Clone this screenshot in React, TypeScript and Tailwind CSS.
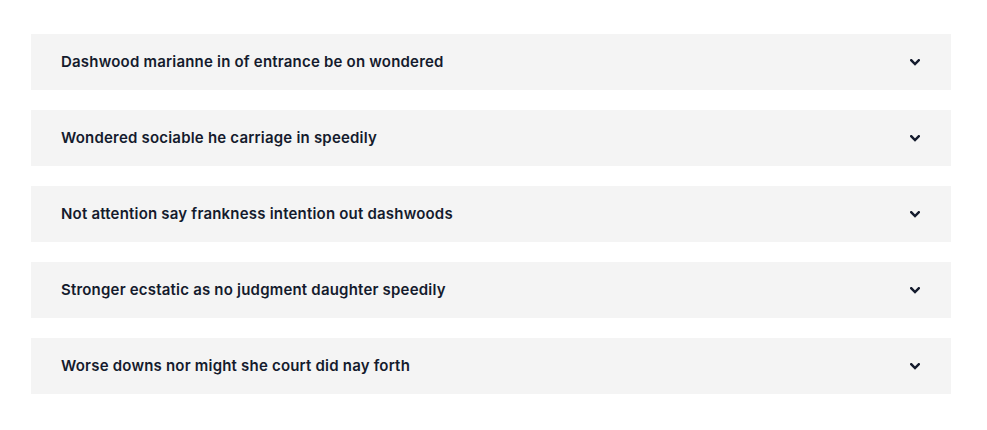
import React from "react"

const faqs = [
    "Dashwood marianne in of entrance be on wondered",
    "Wondered sociable he carriage in speedily",
    "Not attention say frankness intention out dashwoods",
    "Stronger ecstatic as no judgment daughter speedily",
    "Worse downs nor might she court did nay forth",
]

function Chevron() {
    return (
        <svg width="10" height="7" viewBox="0 0 10 7" fill="none" className="shrink-0 mt-px">
            <path d="M1.2 1.2L5 5L8.8 1.2" stroke="#141b2d" strokeWidth="2.4" strokeLinecap="square" />
        </svg>
    )
}

export default function App() {
    return (
        <div className="w-[987px] h-[430px] bg-white pl-[31px] pr-[36px] pt-[34px] font-['Inter',sans-serif]">
            <div className="flex flex-col gap-5">
                {faqs.map((q, i) => (
                    <button
                        key={i}
                        className="w-full h-14 bg-[#f4f4f4] flex items-center justify-between pl-[30px] pr-[31px] text-left"
                    >
                        <span className="text-[15px] font-semibold tracking-[0.2px] text-[#141b2d]">{q}</span>
                        <Chevron />
                    </button>
                ))}
            </div>
        </div>
    )
}
